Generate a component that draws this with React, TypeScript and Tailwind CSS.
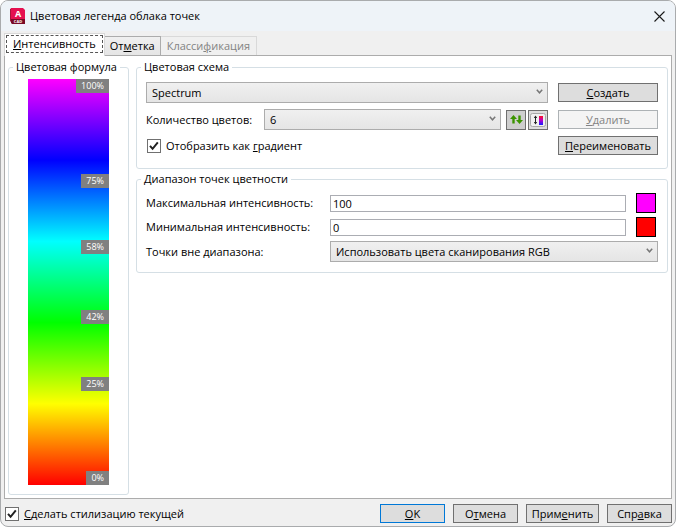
import { useState } from "react";
import type { ReactNode } from "react";

const marks = [75, 58.5, 41.5, 25];

function Arrow() {
    return (
        <svg className="pointer-events-none absolute right-[5px] top-[7px]" width="7" height="6" viewBox="0 0 7 6" fill="none" stroke="#777" strokeWidth="1.5">
            <path d="M0.8 0.8 L3.5 3.8 L6.2 0.8" />
        </svg>
    );
}

function Select({ id, label, value, className = "" }: { id: string; label?: string; value: string; className?: string }) {
    return (
        <div className={`relative h-[21px] min-w-0 ${className}`}>
            <select
                id={id}
                aria-label={label}
                className="block h-full w-full appearance-none border border-[#acacac] bg-linear-to-b from-[#f0f0f0] to-[#e5e5e5] pl-[5px] pr-5 leading-4"
            >
                <option>{value}</option>
            </select>
            <Arrow />
        </div>
    );
}

function Button({ children, className = "", disabled = false }: { children: ReactNode; className?: string; disabled?: boolean }) {
    return (
        <button
            type="button"
            disabled={disabled}
            className={`h-[19px] border text-center leading-4 whitespace-nowrap ${
                disabled ? "border-[#adb2b5] bg-[#f4f4f4] text-[#838383]" : "bg-[#dddddd]"
            } ${className}`}
        >
            {children}
        </button>
    );
}

function Check({ children, className = "" }: { children: ReactNode; className?: string }) {
    const [checked, setChecked] = useState(true);
    return (
        <label className={`flex items-center gap-[5px] ${className}`}>
            <span className="relative h-[14px] w-[14px]">
                <input
                    type="checkbox"
                    checked={checked}
                    onChange={(e) => setChecked(e.target.checked)}
                    className="block h-[14px] w-[14px] appearance-none border border-[#707070] bg-white"
                />
                {checked && (
                    <svg className="pointer-events-none absolute inset-0" width="14" height="14" viewBox="0 0 14 14" fill="none" stroke="#212121" strokeWidth="2">
                        <path d="M3 6.8 L5.6 9.8 L10.8 3.4" />
                    </svg>
                )}
            </span>
            <span>{children}</span>
        </label>
    );
}

function Group({ title, children, className = "" }: { title: string; children: ReactNode; className?: string }) {
    return (
        <fieldset className={`min-w-0 rounded-[3px] border border-[#d5dfe5] ${className}`}>
            <legend className="ml-1 px-[3px] leading-4 whitespace-nowrap">{title}</legend>
            {children}
        </fieldset>
    );
}

function Badge({ children }: { children: ReactNode }) {
    return <span className="block bg-[#808080] px-[5px] text-[9px] leading-[14px] text-white">{children}</span>;
}

function ColorBar() {
    return (
        <div className="relative mx-[19px] mt-1 mb-[9px] flex-1 bg-[linear-gradient(to_bottom,#f0f,#00f_20%,#0ff_40%,#0f0_60%,#ff0_80%,#f00)]">
            <div className="absolute right-0 top-0">
                <Badge>100%</Badge>
            </div>
            {marks.map((m) => (
                <div key={m} className="absolute right-0 -translate-y-1/2" style={{ top: `${100 - m}%` }}>
                    <Badge>{m > 50 ? Math.floor(m) : Math.ceil(m)}%</Badge>
                </div>
            ))}
            <div className="absolute right-0 bottom-0">
                <Badge>0%</Badge>
            </div>
        </div>
    );
}

function Logo() {
    return (
        <svg width="15" height="16" viewBox="0 0 15 16">
            <path d="M0 1 L2 0 V15 L0 13Z" fill="#a8123a" />
            <path d="M1 0 H13 L15 2 V11 H1Z" fill="#e51050" />
            <path d="M1 11 H15 V16 H2 L1 15Z" fill="#7a0a26" />
            <text x="8" y="9" textAnchor="middle" fontSize="9" fontWeight="700" fill="#fff">A</text>
            <text x="8" y="15" textAnchor="middle" fontSize="4" fontWeight="700" fill="#fff">CAD</text>
        </svg>
    );
}

function App() {
    const [max, setMax] = useState("100");
    const [min, setMin] = useState("0");

    return (
        <div className="bg-white font-['Open_Sans','Noto_Sans',sans-serif] text-[11px] leading-4 text-black">
            <div className="flex min-h-screen flex-col overflow-hidden rounded-lg border border-[#a9abad] bg-[#f0f0f0]">
                <header className="flex h-[30px] shrink-0 items-center bg-[#eef3f8] pl-[9px] pr-[10px]">
                    <Logo />
                    <h1 className="ml-[5px]">Цветовая легенда облака точек</h1>
                    <button type="button" aria-label="Закрыть" className="ml-auto">
                        <svg width="11" height="11" viewBox="0 0 11 11" stroke="#1a1a1a" strokeWidth="1.1">
                            <path d="M0.5 0.5 L10.5 10.5 M10.5 0.5 L0.5 10.5" />
                        </svg>
                    </button>
                </header>

                <main className="flex flex-1 flex-col px-[3px] pt-[2px]">
                    <div role="tablist" className="flex items-end">
                        <button type="button" role="tab" aria-selected="true" className="relative z-10 -mb-px h-[23px] border-x border-t border-[#d9d9d9] bg-white p-px pb-[3px]">
                            <span className="flex h-full items-center border border-dashed border-[#555] px-[6px]">
                                <span><u>И</u>нтенсивность</span>
                            </span>
                        </button>
                        <button type="button" role="tab" className="h-[19px] border-t border-r border-[#acacac] bg-linear-to-b from-[#f0f0f0] to-[#e5e5e5] px-[5px]">
                            От<u>м</u>етка
                        </button>
                        <button type="button" role="tab" disabled className="h-[19px] border-t border-r border-[#d9d9d9] px-[6px] text-[#838383]">
                            Класси<u>ф</u>икация
                        </button>
                    </div>

                    <div className="flex flex-1 gap-[7px] border border-[#acacac] bg-white p-[3px]">
                        <Group title="Цветовая формула" className="flex w-[121px] shrink-0 flex-col">
                            <ColorBar />
                        </Group>

                        <div className="flex min-w-0 flex-1 flex-col gap-[2px]">
                            <Group title="Цветовая схема">
                                <div className="grid grid-cols-[1fr_100px] items-center gap-x-[10px] gap-y-[6px] px-[9px] pt-[7px] pb-[13px]">
                                    <Select id="scheme" label="Цветовая схема" value="Spectrum" />
                                    <Button className="border-[#707070]"><u>С</u>оздать</Button>
                                    <div className="flex items-center">
                                        <label htmlFor="count" className="w-[118px] shrink-0">Количество цветов:</label>
                                        <Select id="count" value="6" className="flex-1" />
                                        <button type="button" aria-label="Обратный порядок" className="ml-[5px] flex h-[20px] w-[20px] items-center justify-center border border-[#707070] bg-[#cfcfcf]">
                                            <svg width="13" height="11" viewBox="0 0 13 11" fill="#3c9400">
                                                <path d="M3.5 1 L7 5 H4.7 V9.5 H2.3 V5 H0Z M9.5 10 L6 6 H8.3 V1.5 H10.7 V6 H13Z" />
                                            </svg>
                                        </button>
                                        <button type="button" aria-label="Диапазон цветов" className="ml-[2px] flex h-[20px] w-[20px] items-center justify-center border border-[#707070] bg-[#dddddd]">
                                            <svg width="16" height="16" viewBox="0 0 16 16">
                                                <defs>
                                                    <linearGradient id="ramp" x1="0" y1="0" x2="0" y2="1">
                                                        <stop offset="0" stopColor="#ff1020" />
                                                        <stop offset="0.5" stopColor="#b000d0" />
                                                        <stop offset="1" stopColor="#1020ff" />
                                                    </linearGradient>
                                                </defs>
                                                <rect x="0.5" y="1.5" width="15" height="13" rx="2" fill="#f0f0f0" stroke="#a8a8a8" />
                                                <path d="M5.5 5 V11" stroke="#222" />
                                                <path d="M3.8 6 L5.5 3.5 L7.2 6Z M3.8 10 L5.5 12.5 L7.2 10Z" fill="#222" />
                                                <rect x="9" y="4" width="4" height="9" fill="url(#ramp)" />
                                            </svg>
                                        </button>
                                    </div>
                                    <Button disabled><u>У</u>далить</Button>
                                    <Check className="pl-px">Отобразить как <u>г</u>радиент</Check>
                                    <Button className="border-[#707070]"><u>П</u>ереименовать</Button>
                                </div>
                            </Group>

                            <Group title="Диапазон точек цветности">
                                <div className="grid grid-cols-[184px_1fr] items-center gap-y-1 px-[9px] pt-[6px] pb-[10px]">
                                    <label htmlFor="max">Максимальная интенсивность:</label>
                                    <div className="flex items-center gap-[10px] pr-[2px]">
                                        <input id="max" value={max} onChange={(e) => setMax(e.target.value)} className="h-[17px] min-w-0 flex-1 border border-[#abadb3] bg-white px-[2px] leading-[15px]" />
                                        <button type="button" aria-label="Цвет максимума" className="h-[20px] w-[20px] border border-black bg-[#ff00ff]" />
                                    </div>
                                    <label htmlFor="min">Минимальная интенсивность:</label>
                                    <div className="flex items-center gap-[10px] pr-[2px]">
                                        <input id="min" value={min} onChange={(e) => setMin(e.target.value)} className="h-[17px] min-w-0 flex-1 border border-[#abadb3] bg-white px-[2px] leading-[15px]" />
                                        <button type="button" aria-label="Цвет минимума" className="h-[20px] w-[20px] border border-black bg-[#ff0000]" />
                                    </div>
                                    <label htmlFor="outside">Точки вне диапазона:</label>
                                    <Select id="outside" value="Использовать цвета сканирования RGB" />
                                </div>
                            </Group>
                        </div>
                    </div>
                </main>

                <footer className="flex shrink-0 items-center pt-[5px] pb-[3px] pl-1 pr-[3px]">
                    <Check><u>С</u>делать стилизацию текущей</Check>
                    <div className="ml-auto flex gap-2">
                        <Button className="w-[65px] border-[#0078d7]"><u>O</u>K</Button>
                        <Button className="w-[65px] border-[#707070]">О<u>т</u>мена</Button>
                        <Button className="w-[73px] border-[#707070]">Прим<u>е</u>нить</Button>
                        <Button className="w-[65px] border-[#707070]">Спр<u>а</u>вка</Button>
                    </div>
                </footer>
            </div>
        </div>
    );
}

export default App;
